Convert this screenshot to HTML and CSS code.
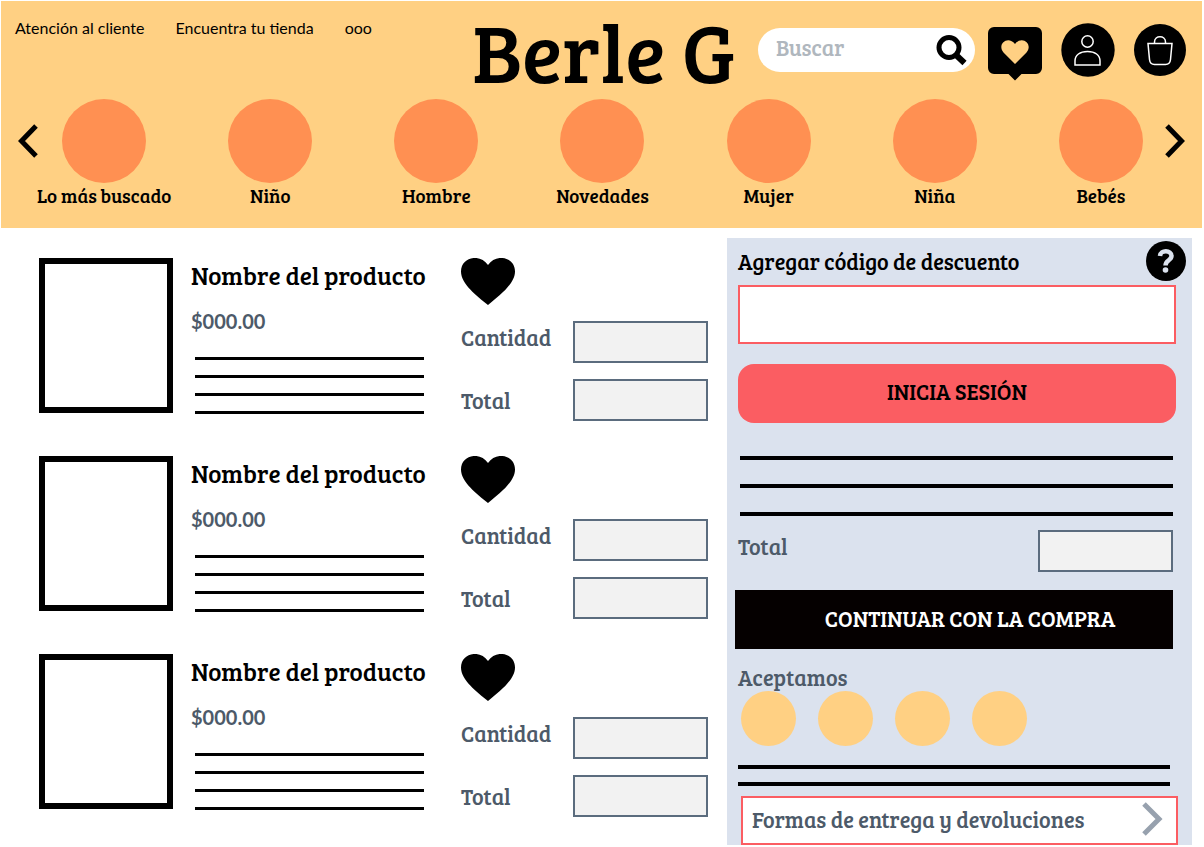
FILE: index.html
```html
<!DOCTYPE html>
<html lang="es">
<head>
<meta charset="utf-8">
<meta name="viewport" content="width=device-width, initial-scale=1">
<title>Berle G</title>
<link rel="stylesheet" href="styles.css">
</head>
<body>
<header class="site-header">
  <div class="topbar">
    <nav class="links" aria-label="Ayuda">
      <a href="#atencion">Atención al cliente</a>
      <a href="#tiendas">Encuentra tu tienda</a>
      <a href="#mas">ooo</a>
    </nav>
    <h1 class="brand">Berle G</h1>
    <form class="search" role="search">
      <input class="search-input" type="search" placeholder="Buscar" aria-label="Buscar">
      <button class="icon-button" type="button" aria-label="Buscar productos">
        <svg width="31" height="31" viewBox="0 0 31 31"><circle cx="13" cy="12.500" r="10" fill="none" stroke="#000" stroke-width="5"/><path d="M19.500 19.500 28.500 28" stroke="#000" stroke-width="6"/></svg>
      </button>
    </form>
    <div class="actions">
      <button class="icon-button" type="button" aria-label="Favoritos">
        <svg width="54" height="62" viewBox="0 -8 54 62"><path d="M6 0h42a6 6 0 0 1 6 6v35a6 6 0 0 1-6 6H33.500L27 53.500 20.500 47H6a6 6 0 0 1-6-6V6a6 6 0 0 1 6-6z"/><path fill="#ffd083" d="M27 37 15.500 25.500C8.500 17 20 8 27 17 34 8 45.500 17 38.500 25.500z"/></svg>
      </button>
      <button class="icon-button" type="button" aria-label="Mi cuenta">
        <svg width="54" height="54" viewBox="0 0 54 54"><circle cx="27" cy="27" r="26.700"/><g fill="none" stroke="#fff" stroke-width="1.500"><circle cx="26.500" cy="18.500" r="5.700"/><path d="M14 42v-4c0-6 5-9.500 12.500-9.500S39 32 39 38v4z"/></g></svg>
      </button>
      <button class="icon-button" type="button" aria-label="Bolsa">
        <svg width="52" height="52" viewBox="0 0 52 52"><circle cx="26" cy="26" r="26"/><g fill="none" stroke="#fff" stroke-width="1.500"><path d="M14 19.500h24l-1.500 16q-.5 5-5 5h-11q-4.500 0-5-5z"/><path d="M20.500 19.500v-1.500c0-7 11-7 11 0v1.500"/></g></svg>
      </button>
    </div>
  </div>
  <nav class="carousel" aria-label="Categorías">
    <button class="icon-button arrow arrow-prev" type="button" aria-label="Anterior">
      <svg width="20" height="34" viewBox="0 0 20 34"><path d="M18 2 3.500 17 18 32" fill="none" stroke="#000" stroke-width="5"/></svg>
    </button>
    <ul class="categories">
      <li><a href="#buscado"><span class="bubble"></span>Lo más buscado</a></li>
      <li><a href="#nino"><span class="bubble"></span>Niño</a></li>
      <li><a href="#hombre"><span class="bubble"></span>Hombre</a></li>
      <li><a href="#novedades"><span class="bubble"></span>Novedades</a></li>
      <li><a href="#mujer"><span class="bubble"></span>Mujer</a></li>
      <li><a href="#nina"><span class="bubble"></span>Niña</a></li>
      <li><a href="#bebes"><span class="bubble"></span>Bebés</a></li>
    </ul>
    <button class="icon-button arrow arrow-next" type="button" aria-label="Siguiente">
      <svg width="20" height="34" viewBox="0 0 20 34"><path d="M2 2 16.500 17 2 32" fill="none" stroke="#000" stroke-width="5"/></svg>
    </button>
  </nav>
</header>

<main class="page">
  <section class="products" aria-label="Productos">
    <article class="product">
      <div class="photo"></div>
      <div class="info">
        <h2 class="name">Nombre del producto</h2>
        <p class="price">$000.00</p>
        <div class="lines"><hr><hr><hr><hr></div>
      </div>
      <div class="controls">
        <button class="icon-button heart" type="button" aria-label="Agregar a favoritos"><svg width="54" height="47" viewBox="0 0 54 47"><path d="M27 47C16 38 0 26 0 13.500 0-1 19-5 27 7 35-5 54-1 54 13.500 54 26 38 38 27 47z"/></svg></button>
        <label class="raised" for="qty1">Cantidad</label><input class="field" id="qty1" type="text">
        <label for="tot1">Total</label><input class="field" id="tot1" type="text">
      </div>
    </article>
    <article class="product">
      <div class="photo"></div>
      <div class="info">
        <h2 class="name">Nombre del producto</h2>
        <p class="price">$000.00</p>
        <div class="lines"><hr><hr><hr><hr></div>
      </div>
      <div class="controls">
        <button class="icon-button heart" type="button" aria-label="Agregar a favoritos"><svg width="54" height="47" viewBox="0 0 54 47"><path d="M27 47C16 38 0 26 0 13.500 0-1 19-5 27 7 35-5 54-1 54 13.500 54 26 38 38 27 47z"/></svg></button>
        <label class="raised" for="qty2">Cantidad</label><input class="field" id="qty2" type="text">
        <label for="tot2">Total</label><input class="field" id="tot2" type="text">
      </div>
    </article>
    <article class="product">
      <div class="photo"></div>
      <div class="info">
        <h2 class="name">Nombre del producto</h2>
        <p class="price">$000.00</p>
        <div class="lines"><hr><hr><hr><hr></div>
      </div>
      <div class="controls">
        <button class="icon-button heart" type="button" aria-label="Agregar a favoritos"><svg width="54" height="47" viewBox="0 0 54 47"><path d="M27 47C16 38 0 26 0 13.500 0-1 19-5 27 7 35-5 54-1 54 13.500 54 26 38 38 27 47z"/></svg></button>
        <label class="raised" for="qty3">Cantidad</label><input class="field" id="qty3" type="text">
        <label for="tot3">Total</label><input class="field" id="tot3" type="text">
      </div>
    </article>
  </section>

  <aside class="summary">
    <div class="coupon-head">
      <label for="coupon">Agregar código de descuento</label>
      <button class="icon-button" type="button" aria-label="Ayuda"><svg width="40" height="40" viewBox="0 0 40 40"><circle cx="20" cy="20" r="20"/><path d="M14 15c.5-6.500 11.500-6 11.500 0 0 4.500-6 4-6 9.500" fill="none" stroke="#dbe2ee" stroke-width="4.500"/><circle cx="19.500" cy="29" r="2.800" fill="#dbe2ee"/></svg></button>
    </div>
    <input class="coupon" id="coupon" type="text">
    <button class="login" type="button">INICIA SESIÓN</button>
    <div class="summary-lines"><hr><hr><hr></div>
    <div class="total-row"><label class="raised" for="total">Total</label><input class="field" id="total" type="text"></div>
    <button class="checkout" type="button">CONTINUAR CON LA COMPRA</button>
    <h2 class="accept">Aceptamos</h2>
    <div class="payments"><span></span><span></span><span></span><span></span></div>
    <div class="policy-lines"><hr><hr></div>
    <a class="delivery" href="#entrega">Formas de entrega y devoluciones
      <svg width="21" height="34" viewBox="0 0 21 34"><path d="M2 2 17 17 2 32" fill="none" stroke="#97a1ae" stroke-width="5"/></svg>
    </a>
  </aside>
</main>
</body>
</html>
```
FILE: styles.css
```css
* { box-sizing: border-box; }
body {
  margin: 0;
  padding: 1px 2px 2px 1px;
  background: #fff;
  color: #000;
  font-family: "Bree Serif", "DejaVu Serif Condensed", "DejaVu Serif", serif;
  font-size: 22px;
  line-height: 24px;
}
h1, h2, p, ul, hr { margin: 0; padding: 0; font-weight: 400; }
ul { list-style: none; }
a { color: inherit; text-decoration: none; }
hr { border: 0; background: #000; }
svg { display: block; }
.icon-button { padding: 0; border: 0; background: none; }

.site-header { background: #ffd083; height: 227px; }
.topbar {
  display: grid;
  grid-template-columns: 457px 286px 217px 1fr;
  height: 98px;
  padding: 0 16px 0 14px;
  align-items: center;
}
.links {
  display: flex;
  gap: 31px;
  align-self: start;
  padding-top: 15px;
  font-family: Lato, sans-serif;
  font-size: 16px;
}
.brand {
  font-size: 83px;
  line-height: 98px;
  white-space: nowrap;
}
.search {
  display: flex;
  align-items: center;
  height: 44px;
  padding: 0 8px 0 18px;
  border-radius: 22px;
  background: #fff;
}
.search-input {
  flex: 1;
  min-width: 0;
  padding: 0 0 6px;
  border: 0;
  background: none;
  font: inherit;
}
.search-input::placeholder { color: #b0b7be; opacity: 1; }
.actions { display: flex; align-items: center; justify-content: flex-end; gap: 19px; }

.carousel { position: relative; padding: 0 18px 0 20px; }
.categories { display: grid; grid-template-columns: repeat(7, 1fr); }
.categories a {
  display: flex;
  flex-direction: column;
  align-items: center;
  gap: 1px;
  font-size: 19px;
  white-space: nowrap;
}
.bubble { width: 84px; height: 84px; border-radius: 50%; background: #ff9052; }
.arrow { position: absolute; top: 25px; }
.arrow-prev { left: 17px; }
.arrow-next { right: 17px; }

.page {
  display: grid;
  grid-template-columns: minmax(0, 1fr) 465px;
  padding: 10px 10px 0 0;
}
.products { display: grid; gap: 35px; align-content: start; padding: 20px 19px 0 38px; }
.product { display: grid; grid-template-columns: 134px minmax(0, 1fr) 247px; column-gap: 18px; }
.photo { height: 155px; border: 6px solid #000; }
.name { padding-top: 3px; font-size: 25px; line-height: 28px; white-space: nowrap; }
.price {
  padding-top: 20px;
  color: #4d5a69;
  font-family: Lato, sans-serif;
  font-size: 20px;
  font-weight: 700;
}
.lines { display: grid; gap: 15px; width: 229px; margin: 24px 0 0 4px; }
.lines hr { height: 3px; }
.controls {
  display: grid;
  grid-template-columns: 112px 135px;
  grid-template-rows: 47px 42px 42px;
  row-gap: 16px;
  align-items: center;
  color: #4d5a69;
}
.heart { grid-column: 1 / -1; justify-self: start; }
.raised { padding-bottom: 10px; }
.field {
  width: 135px;
  height: 42px;
  border: 2px solid #5b6c7e;
  background: #f2f2f2;
  font: inherit;
}

.summary {
  display: flex;
  flex-direction: column;
  padding: 3px 16px 0 11px;
  background: #dbe2ee;
}
.coupon-head {
  display: flex;
  justify-content: space-between;
  align-items: center;
  margin-right: -10px;
}
.coupon { height: 59px; margin-top: 4px; border: 2px solid #fb5d62; background: #fff; font: inherit; }
.login {
  height: 59px;
  margin-top: 20px;
  padding: 0 0 6px;
  border: 0;
  border-radius: 16px;
  background: #fb5d62;
  font: inherit;
}
.summary-lines { display: grid; gap: 24px; margin: 33px 3px 0 2px; }
.summary-lines hr, .policy-lines hr { height: 4px; }
.total-row {
  display: flex;
  justify-content: space-between;
  align-items: center;
  margin: 14px 3px 0 0;
  color: #4d5a69;
}
.checkout {
  height: 59px;
  margin: 18px 3px 0 -3px;
  padding: 0 0 4px 32px;
  border: 0;
  background: #050000;
  color: #fff;
  font: inherit;
  white-space: nowrap;
}
.accept { margin-top: 15px; color: #4d5a69; font-size: 22px; line-height: 27px; }
.payments { display: flex; gap: 22px; padding-left: 3px; }
.payments span { width: 55px; height: 55px; border-radius: 50%; background: #ffd083; }
.policy-lines { display: grid; gap: 13px; margin: 19px 6px 0 0; }
.delivery {
  display: flex;
  justify-content: space-between;
  align-items: center;
  height: 49px;
  margin: 10px -2px 0 3px;
  padding: 0 13px 4px 9px;
  border: 2px solid #fb5d62;
  background: #fff;
  color: #4d5a69;
  white-space: nowrap;
}
```
